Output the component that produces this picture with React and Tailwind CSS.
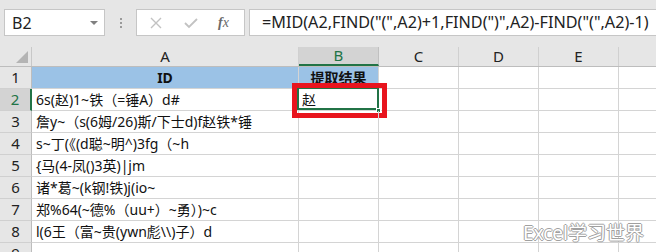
import React from 'react';

const font = { fontFamily: '"Noto Sans", "Noto Sans CJK SC", sans-serif' };

const rows = [
  { a: 'ID', b: '提取结果', head: true },
  { a: '6s(赵)1~铁（=锤A）d#', b: '赵', sel: true },
  { a: '詹y~（s(6姆/26)斯/下士d)f赵铁*锤' },
  { a: 's~丁(《(d聪~明^)3fg（~h' },
  { a: '{马(4-凤()3英)|jm' },
  { a: '诸*葛~(k钢!铁)j(io~' },
  { a: '郑%64(~德%（uu+）~勇）)~c' },
  { a: 'l(6王（富~贵(ywn彪\\\\)子）d' },
  { a: '' },
];

const cols = ['A', 'B', 'C', 'D', 'E'];

const FormulaBar = () => (
  <div className="h-[47px] bg-[#e6e6e6] flex items-start pt-[9px] pl-[4px]">
    {/* name box */}
    <div className="w-[101px] h-[27px] bg-white border border-[#c6c6c6] flex items-center justify-between pl-[7px] pr-[6px]">
      <span className="text-[16px] text-[#222]">B2</span>
      <span className="w-0 h-0 border-l-[4px] border-r-[4px] border-t-[4px] border-l-transparent border-r-transparent border-t-[#808080]" />
    </div>
    {/* separator dots */}
    <div className="w-[31px] h-[27px] flex flex-col items-center justify-center gap-[2px]">
      <span className="w-[2px] h-[2px] bg-[#9a9a9a]" />
      <span className="w-[2px] h-[2px] bg-[#9a9a9a]" />
      <span className="w-[2px] h-[2px] bg-[#9a9a9a]" />
    </div>
    {/* buttons */}
    <div className="w-[109px] h-[27px] bg-white border border-[#c6c6c6] flex items-center">
      <svg width="12" height="12" viewBox="0 0 12 12" className="ml-[13px]">
        <path d="M1 1L11 11M11 1L1 11" stroke="#c2c2c2" strokeWidth="1.4" fill="none" />
      </svg>
      <svg width="14" height="12" viewBox="0 0 14 12" className="ml-[22px]">
        <path d="M1 6L5 10L13 2" stroke="#c2c2c2" strokeWidth="1.8" fill="none" />
      </svg>
      <span className="ml-[20px] text-[14px] italic text-[#6a6a6a]" style={{ fontFamily: '"Liberation Serif", serif' }}>
        <span className="font-bold">f</span>x
      </span>
    </div>
    <div className="flex-1 ml-[4px] h-[27px] bg-white border border-[#c6c6c6] border-r-0 flex items-center pl-[12px] overflow-hidden whitespace-nowrap">
      <span className="text-[16.2px] text-[#222]">=MID(A2,FIND("(",A2)+1,FIND(")",A2)-FIND("(",A2)-1)</span>
    </div>
  </div>
);

export default function App() {
  return (
    <div className="w-[656px] h-[252px] overflow-hidden bg-white relative" style={font}>
      <FormulaBar />
      {/* column headers */}
      <div className="flex h-[20px] bg-[#e6e6e6] border-b border-[#bdbdbd]">
        <div className="w-[32px] h-full border-r border-[#c8c8c8] flex items-end justify-end pr-[3px] pb-[3px]">
          <svg width="12" height="12" viewBox="0 0 12 12">
            <path d="M12 0L12 12L0 12Z" fill="#b4b4b4" />
          </svg>
        </div>
        <div className="w-[267px] flex items-center justify-center border-r border-[#d0d0d0] text-[15px] text-[#222]">A</div>
        {cols.slice(1).map((c) => (
          <div
            key={c}
            className={`w-[80px] flex items-center justify-center border-r text-[15px] ${
              c === 'B' ? 'bg-[#d3d3d3] text-[#217346] border-[#c0c0c0] border-b-2 border-b-[#217346]' : 'text-[#222] border-[#d0d0d0]'
            }`}
          >
            {c}
          </div>
        ))}
        <div className="flex-1" />
      </div>
      {/* rows */}
      {rows.map((r, i) => (
        <div key={i} className="flex h-[22px]">
          <div
            className={`w-[32px] h-full flex items-center justify-center text-[15px] border-b border-[#d0d0d0] ${
              r.sel ? 'bg-[#d3d3d3] text-[#217346] border-r-2 border-r-[#217346]' : 'bg-[#e6e6e6] text-[#222] border-r border-r-[#bdbdbd]'
            }`}
          >
            {i + 1}
          </div>
          <div
            className={`w-[267px] h-full flex items-center border-r border-b border-[#d4d4d4] text-[14px] text-[#111] whitespace-nowrap overflow-hidden ${
              r.head ? 'bg-[#9bc2e6] justify-center font-bold' : 'pl-[4px]'
            }`}
          >
            {r.a}
          </div>
          <div
            className={`w-[80px] h-full flex items-center border-r border-b border-[#d4d4d4] text-[14px] text-[#111] relative ${
              r.head ? 'bg-[#9bc2e6] justify-center font-bold' : 'pl-[3px]'
            }`}
          >
            {r.b}
            {r.sel && (
              <>
                <span className="absolute left-[-2px] top-[-2px] w-[82px] h-[23px] border-2 border-[#217346]" />
                <span className="absolute right-[-3px] bottom-[-3px] w-[5px] h-[5px] bg-[#217346] border border-white" />
                <span className="absolute left-[-7px] top-[-6px] w-[95px] h-[35px] border-[5px] border-[#e8141e] pointer-events-none" />
              </>
            )}
          </div>
          {[0, 1, 2].map((k) => (
            <div key={k} className="w-[80px] h-full border-r border-b border-[#d4d4d4]" />
          ))}
          <div className="flex-1 h-full border-b border-[#d4d4d4]" />
        </div>
      ))}
      {/* watermark */}
      <div
        className="absolute left-[523px] top-[221px] text-[19px] leading-[24px] text-white whitespace-nowrap"
        style={{ textShadow: '1px 0 #a0a0a0, -1px 0 #a0a0a0, 0 1px #a0a0a0, 0 -1px #a0a0a0' }}
      >
        Excel学习世界
      </div>
    </div>
  );
}
